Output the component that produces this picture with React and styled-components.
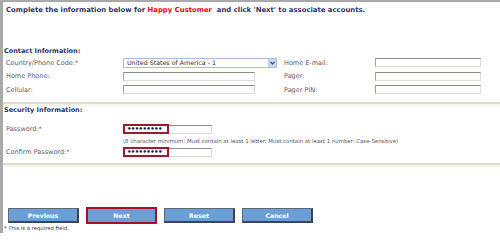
import React from 'react';
import styled, { createGlobalStyle } from 'styled-components';

const GlobalStyle = createGlobalStyle`
  html, body {
    margin: 0;
    padding: 0;
    background: #ffffff;
  }
  body {
    font-family: 'DejaVu Sans', Verdana, sans-serif;
  }
`;

const Page = styled.div`
  width: 497px;
  height: 231px;
  border-top: 2px solid #a9a9a9;
  border-left: 3px solid #a9a9a9;
  display: flex;
  flex-direction: column;
  overflow: hidden;
`;

const Heading = styled.div`
  font-size: 6.9px;
  font-weight: bold;
  color: #333366;
  padding: 4px 0 0 3px;
  height: 44px;
  box-sizing: border-box;
`;

const Name = styled.span`
  color: #ff0000;
`;

const Section = styled.div`
  padding: 0 3px 0 1px;
  border-bottom: 2px solid #deddcf;
  box-shadow: 0 2px 0 #f7f6ee;
`;

const SectionTitle = styled.div`
  font-size: 6.5px;
  font-weight: bold;
  color: #333366;
  height: ${p => p.$h}px;
  line-height: ${p => p.$h}px;
`;

const Grid = styled.div`
  display: grid;
  grid-template-columns: 119px 159px 93px 112px;
  grid-auto-rows: 13.5px;
  align-items: center;
  padding-bottom: 5.5px;
`;

const Label = styled.div`
  font-size: 6.5px;
  color: #5c5c6e;
  padding-left: 2px;
  white-space: nowrap;
`;

const Field = styled.div`
  width: ${p => p.$w}px;
  height: 9px;
  box-sizing: border-box;
  background: #ffffff;
  border: 1px solid #dcdcd6;
  border-top: 1px solid #8d8d85;
  border-left: 1px solid #a6a6a0;
  display: flex;
  align-items: center;
`;

const Select = styled.div`
  width: 154px;
  height: 10px;
  box-sizing: border-box;
  border: 1px solid #a9bfdc;
  background: #ffffff;
  display: flex;
  align-items: center;
  justify-content: space-between;
  font-size: 6.3px;
  color: #333344;
  padding-left: 3px;
  white-space: nowrap;
`;

const Arrow = styled.span`
  width: 8px;
  height: 8px;
  background: #c6d6f0;
  display: flex;
  align-items: center;
  justify-content: center;
`;

const SecurityGrid = styled.div`
  display: grid;
  grid-template-columns: 119px 1fr;
  grid-template-rows: 12px 12px 10px;
  align-items: center;
  margin-top: 6px;
  padding-bottom: 6px;
`;

const Dots = styled.span`
  height: 10px;
  width: 46px;
  box-sizing: border-box;
  border: 2px solid #9b1b30;
  margin: -1px 0 0 -1px;
  font-size: 7px;
  line-height: 6px;
  color: #1a1a40;
  padding-left: 2px;
  letter-spacing: -0.6px;
  font-weight: bold;
  overflow: hidden;
`;

const Hint = styled.div`
  font-size: 5.4px;
  color: #555566;
  white-space: nowrap;
`;

const Spacer = styled.div`
  flex: 1;
`;

const Buttons = styled.div`
  display: flex;
  gap: 7px;
  padding-left: 5px;
  align-items: center;
  height: 17px;
`;

const Button = styled.button`
  width: 71px;
  height: ${p => (p.$active ? '17px' : '15px')};
  box-sizing: border-box;
  background: #6b9fd4;
  color: #ffffff;
  font-family: 'DejaVu Sans', Verdana, sans-serif;
  font-size: 6.2px;
  font-weight: bold;
  padding: 0;
  border: ${p => (p.$active ? '2px solid #a3122a' : '1px solid #5a6a7a')};
  border-bottom: ${p => (p.$active ? '2px solid #a3122a' : '2px solid #3c4650')};
  border-right: ${p => (p.$active ? '2px solid #a3122a' : '2px solid #3c4650')};
`;

const Note = styled.div`
  font-size: 5.3px;
  color: #333344;
  padding: 1px 0 2px 1px;
`;

const ArrowIcon = () => (
  <svg width="5" height="4" viewBox="0 0 5 4">
    <path d="M0.5 1 L2.5 3 L4.5 1" stroke="#2c4f8a" strokeWidth="1.2" fill="none" />
  </svg>
);

export default function App() {
  return (
    <>
      <GlobalStyle />
      <Page>
        <Heading>
          Complete the information below for <Name>Happy Customer</Name>&nbsp; and click 'Next' to associate accounts.
        </Heading>
        <Section>
          <SectionTitle $h={10}>Contact Information:</SectionTitle>
          <Grid>
            <Label>Country/Phone Code:*</Label>
            <Select>
              United States of America - 1
              <Arrow><ArrowIcon /></Arrow>
            </Select>
            <Label>Home E-mail:</Label>
            <Field $w={106} />
            <Label>Home Phone:</Label>
            <Field $w={132} />
            <Label>Pager:</Label>
            <Field $w={106} />
            <Label>Cellular:</Label>
            <Field $w={132} />
            <Label>Pager PIN:</Label>
            <Field $w={106} />
          </Grid>
        </Section>
        <Section>
          <SectionTitle $h={13}>Security Information:</SectionTitle>
          <SecurityGrid>
            <Label>Password:*</Label>
            <Field $w={89}><Dots>•••••••••</Dots></Field>
            <div />
            <Hint>(8 character minimum: Must contain at least 1 letter: Must contain at least 1 number: Case-Sensitive)</Hint>
            <Label>Confirm Password:*</Label>
            <Field $w={89}><Dots>•••••••••</Dots></Field>
          </SecurityGrid>
        </Section>
        <Spacer />
        <Buttons>
          <Button>Previous</Button>
          <Button $active>Next</Button>
          <Button>Reset</Button>
          <Button>Cancel</Button>
        </Buttons>
        <Note>* This is a required field.</Note>
      </Page>
    </>
  );
}
